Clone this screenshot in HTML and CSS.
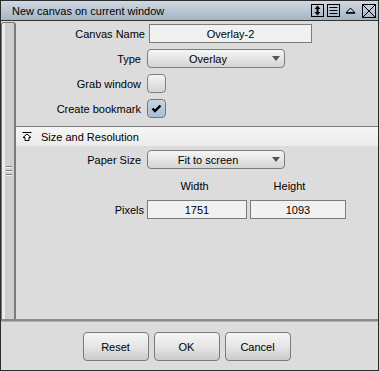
FILE: index.html
```html
<!DOCTYPE html>
<html lang="en">
<head>
  <meta charset="UTF-8">
  <title>New canvas on current window</title>
  <link rel="stylesheet" href="styles.css">
</head>
<body>
  <div class="window">
    <div class="titlebar">
      <span class="title">New canvas on current window</span>
      <div class="tools">
        <svg width="13" height="13" viewBox="0 0 13 13"><rect x="0.5" y="0.5" width="12" height="12" fill="none" stroke="#000"/><path d="M6.5 1.5 L3.5 5 L9.5 5 Z M6.5 11.5 L3.5 8 L9.5 8 Z" fill="#000"/><rect x="5.5" y="4" width="2" height="5" fill="#000"/></svg>
        <svg width="13" height="13" viewBox="0 0 13 13"><rect x="0.5" y="0.5" width="12" height="12" fill="none" stroke="#000"/><path d="M2.5 3.5 H10.5 M2.5 6.5 H10.5 M2.5 9.5 H10.5" stroke="#000"/></svg>
        <svg class="tool-tri" width="11" height="7" viewBox="0 0 11 7"><path d="M5.5 1 L1 5.8 L10 5.8 Z" fill="none" stroke="#000" stroke-width="1" stroke-linejoin="round"/><path d="M1 6 H10" stroke="#000" stroke-width="1.4"/></svg>
        <svg width="14" height="14" viewBox="0 0 14 14"><rect x="0.5" y="0.5" width="13" height="13" fill="none" stroke="#000"/><path d="M1 1 L13 13 M13 1 L1 13" stroke="#000"/></svg>
      </div>
    </div>

    <div class="main">
      <div class="side">
        <div class="grip"><i></i><i></i><i></i></div>
      </div>

      <div class="content">
        <div class="form">
          <label class="near">Canvas Name</label>
          <input class="field name-field" type="text" value="Overlay-2">

          <label>Type</label>
          <div class="select type-select">
            <span class="select-text">Overlay</span>
            <svg class="arrow" width="8" height="5" viewBox="0 0 8 5"><path d="M0 0 H8 L4 5 Z" fill="#555"/></svg>
          </div>

          <label>Grab window</label>
          <span class="check"></span>

          <label>Create bookmark</label>
          <span class="check checked">
            <svg width="13" height="11" viewBox="0 0 13 11"><path d="M2.5 5.5 L5 8 L10.5 2.5" fill="none" stroke="#000" stroke-width="2.4"/></svg>
          </span>
        </div>

        <div class="section-head">
          <svg width="10" height="9" viewBox="0 0 10 9"><path d="M0.5 0.5 H9.5" stroke="#000"/><path d="M5 2 L1 5.5 L3 5.5 L3 8.5 L7 8.5 L7 5.5 L9 5.5 Z" fill="#fff" stroke="#000" stroke-linejoin="miter"/></svg>
          <span>Size and Resolution</span>
        </div>

        <div class="form paper">
          <label>Paper Size</label>
          <div class="select type-select">
            <span class="select-text">Fit to screen</span>
            <svg class="arrow" width="8" height="5" viewBox="0 0 8 5"><path d="M0 0 H8 L4 5 Z" fill="#555"/></svg>
          </div>

          <span></span>
          <div class="col-heads">
            <span>Width</span>
            <span>Height</span>
          </div>

          <label class="near-px">Pixels</label>
          <div class="pair">
            <input class="field px-w" type="text" value="1751">
            <input class="field px-h" type="text" value="1093">
          </div>
        </div>
      </div>
    </div>

    <div class="footer">
      <button type="button">Reset</button>
      <button type="button">OK</button>
      <button type="button">Cancel</button>
    </div>
  </div>
</body>
</html>
```

FILE: styles.css
```css
body {
  margin: 0;
  font-family: "Liberation Sans", Arial, sans-serif;
  font-size: 11px;
  color: #000;
}

.window {
  width: 379px;
  height: 371px;
  box-sizing: border-box;
  border: 1px solid #2c2c2c;
  background: #dcdcdc;
  display: flex;
  flex-direction: column;
}

.titlebar {
  height: 19px;
  border-bottom: 1px solid #333;
  background: linear-gradient(#cfd9e4, #a6b3c1);
  display: flex;
  align-items: center;
  padding-left: 11px;
  padding-right: 2px;
}

.title {
  flex: 1;
}

.tools {
  display: flex;
  align-items: center;
  gap: 3px;
}

.tools svg {
  display: block;
}

.tool-tri {
  margin: 0 3px 0 2px;
}

.main {
  height: 298px;
  display: flex;
}

.side {
  width: 12px;
  margin-top: 1px;
  border: 1px solid #7a7a7a;
  border-right-width: 2px;
  border-bottom: none;
  border-radius: 3px 3px 0 0;
  background: linear-gradient(to right, #ececec 0 3px, #cfcfcf 3px);
  display: flex;
  align-items: center;
  justify-content: center;
}

.grip {
  display: flex;
  flex-direction: column;
  gap: 2px;
  margin-left: 1px;
}

.grip i {
  display: block;
  width: 6px;
  height: 1px;
  background: #808080;
  border-bottom: 1px solid #efefef;
}

.content {
  flex: 1;
}

.form {
  display: grid;
  grid-template-columns: 125px 1fr;
  grid-auto-rows: 19px;
  column-gap: 6px;
  row-gap: 6px;
  padding-top: 3px;
}

.form label {
  align-self: center;
  text-align: right;
  white-space: nowrap;
}

.form .near {
  margin-right: -4px;
}

.form .near-px {
  margin-right: -3px;
}

.field {
  box-sizing: border-box;
  height: 19px;
  margin: 0;
  padding: 0;
  border: 1px solid #7c7c7c;
  background: #f1f1f1;
  font: inherit;
  color: #000;
  text-align: center;
}

.name-field {
  width: 163px;
  margin-left: 2px;
}

.select {
  box-sizing: border-box;
  width: 138px;
  height: 19px;
  border: 1px solid #7c7c7c;
  border-radius: 4px;
  background: linear-gradient(#f6f6f6, #d4d4d4);
  display: flex;
  align-items: center;
}

.select-text {
  flex: 1;
  text-align: center;
}

.arrow {
  margin: 0 4px 0 4px;
}

.check {
  box-sizing: border-box;
  width: 19px;
  height: 19px;
  border: 1px solid #808080;
  border-radius: 4px;
  background: linear-gradient(#f4f4f4, #d3d3d3);
  display: flex;
  align-items: center;
  justify-content: center;
}

.check.checked {
  border-color: #6c7a88;
  background: linear-gradient(#c9d6e3, #a9bccf);
}

.section-head {
  margin-top: 8px;
  height: 19px;
  border-top: 1px solid #7c7c7c;
  background: linear-gradient(#f5f5f5, #ececec);
  display: flex;
  align-items: center;
  gap: 9px;
  padding-left: 6px;
}

.paper {
  padding-top: 4px;
}

.col-heads {
  display: flex;
  align-items: center;
  padding-top: 2px;
}

.col-heads span {
  width: 95px;
  text-align: center;
}

.pair {
  display: flex;
  gap: 3px;
}

.px-w {
  width: 100px;
}

.px-h {
  width: 96px;
}

.footer {
  flex: 1;
  border-top: 2px solid #8a8a8a;
  box-shadow: inset 0 1px 0 #b4b4b4;
  display: flex;
  justify-content: center;
  align-items: flex-start;
  gap: 5px;
  padding-top: 11px;
  padding-right: 6px;
}

.footer button {
  width: 66px;
  height: 29px;
  border: 1px solid #7a7a7a;
  border-radius: 4px;
  background: linear-gradient(#f5f5f5 0%, #e6e6e6 50%, #cbcbcb 100%);
  font: inherit;
  color: #000;
  padding: 0;
}
```
